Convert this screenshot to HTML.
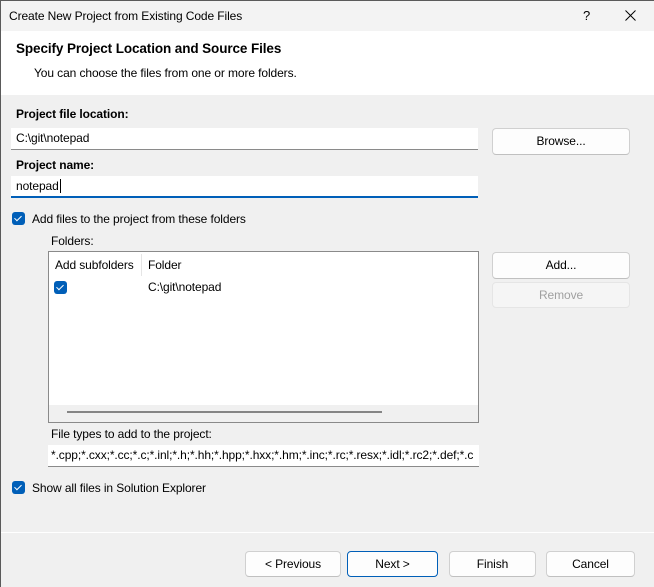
<!DOCTYPE html>
<html><head><style>
*{box-sizing:border-box;margin:0;padding:0}
body{width:654px;height:587px;overflow:hidden;background:#f0f0f0;font-family:"Liberation Sans",sans-serif;font-size:12px;color:#000;position:relative;letter-spacing:-0.1px}
.a{position:absolute;white-space:nowrap}
.win{position:absolute;left:0;top:0;width:654px;height:587px;border-left:1px solid #5a5a5a;border-top:1px solid #5a5a5a}
.inp{position:absolute;background:#fff;border-bottom:1px solid #8a8a8a;padding-left:5px;line-height:20px}
.btn{position:absolute;background:#fdfdfd;border:1px solid #d0d0d0;border-bottom-color:#c0c0c0;border-radius:4px;text-align:center;line-height:24px}
.cb{position:absolute;width:13px;height:13px;background:#005fb8;border-radius:3px}
.cb:after{content:"";position:absolute;left:4px;top:2px;width:3px;height:6px;border-right:1px solid #fff;border-bottom:1px solid #fff;transform:rotate(45deg)}
</style></head><body>
<div class="win"></div>
<div class="a" style="left:1px;top:1px;width:653px;height:30px;background:#f3f3f3"></div>
<div class="a" style="left:9px;top:9px">Create New Project from Existing Code Files</div>
<div class="a" style="left:583px;top:8px;font-size:13px">?</div>
<svg class="a" style="left:625px;top:10px" width="11" height="11"><path d="M0.5 0.5L10.5 10.5M10.5 0.5L0.5 10.5" stroke="#000" stroke-width="1"/></svg>
<div class="a" style="left:1px;top:31px;width:653px;height:64px;background:#fff"></div>
<div class="a" style="left:16px;top:41px;font-size:13.5px;font-weight:bold">Specify Project Location and Source Files</div>
<div class="a" style="left:34px;top:66px">You can choose the files from one or more folders.</div>
<div class="a" style="left:16px;top:107px;font-weight:bold">Project file location:</div>
<div class="inp" style="left:11px;top:128px;width:467px;height:22px;padding-left:5px">C:\git\notepad</div>
<div class="btn" style="left:492px;top:128px;width:138px;height:27px">Browse...</div>
<div class="a" style="left:16px;top:158px;font-weight:bold">Project name:</div>
<div class="inp" style="left:11px;top:176px;width:467px;height:22px;border-bottom:2px solid #005fb8">notepad<span style="border-left:1px solid #000;margin-left:1px"></span></div>
<div class="cb" style="left:12px;top:212px"></div>
<div class="a" style="left:32px;top:212px">Add files to the project from these folders</div>
<div class="a" style="left:51px;top:234px">Folders:</div>
<div class="a" style="left:48px;top:251px;width:431px;height:172px;background:#fff;border:1px solid #8a8a8a"></div>
<div class="a" style="left:141px;top:254px;width:1px;height:22px;background:#e5e5e5"></div>
<div class="a" style="left:55px;top:258px">Add subfolders</div>
<div class="a" style="left:148px;top:258px">Folder</div>
<div class="cb" style="left:54px;top:281px"></div>
<div class="a" style="left:148px;top:280px">C:\git\notepad</div>
<div class="a" style="left:49px;top:405px;width:429px;height:17px;background:#f0f0f0"></div>
<div class="a" style="left:67px;top:411px;width:315px;height:2px;background:#858585"></div>
<div class="btn" style="left:492px;top:252px;width:138px;height:27px">Add...</div>
<div class="btn" style="left:492px;top:282px;width:138px;height:26px;background:#f5f5f5;border-color:#e5e5e5;color:#a0a0a0">Remove</div>
<div class="a" style="left:51px;top:427px">File types to add to the project:</div>
<div class="inp" style="left:48px;top:445px;width:431px;height:22px;padding-left:3px;overflow:hidden">*.cpp;*.cxx;*.cc;*.c;*.inl;*.h;*.hh;*.hpp;*.hxx;*.hm;*.inc;*.rc;*.resx;*.idl;*.rc2;*.def;*.c</div>
<div class="cb" style="left:12px;top:481px"></div>
<div class="a" style="left:32px;top:481px">Show all files in Solution Explorer</div>
<div class="a" style="left:1px;top:532px;width:653px;height:1px;background:#fff"></div>
<div class="btn" style="left:245px;top:551px;width:96px;height:26px">&lt; Previous</div>
<div class="btn" style="left:347px;top:551px;width:91px;height:26px;border-color:#005fb8">Next &gt;</div>
<div class="btn" style="left:449px;top:551px;width:87px;height:26px">Finish</div>
<div class="btn" style="left:546px;top:551px;width:89px;height:26px">Cancel</div>
</body></html>
